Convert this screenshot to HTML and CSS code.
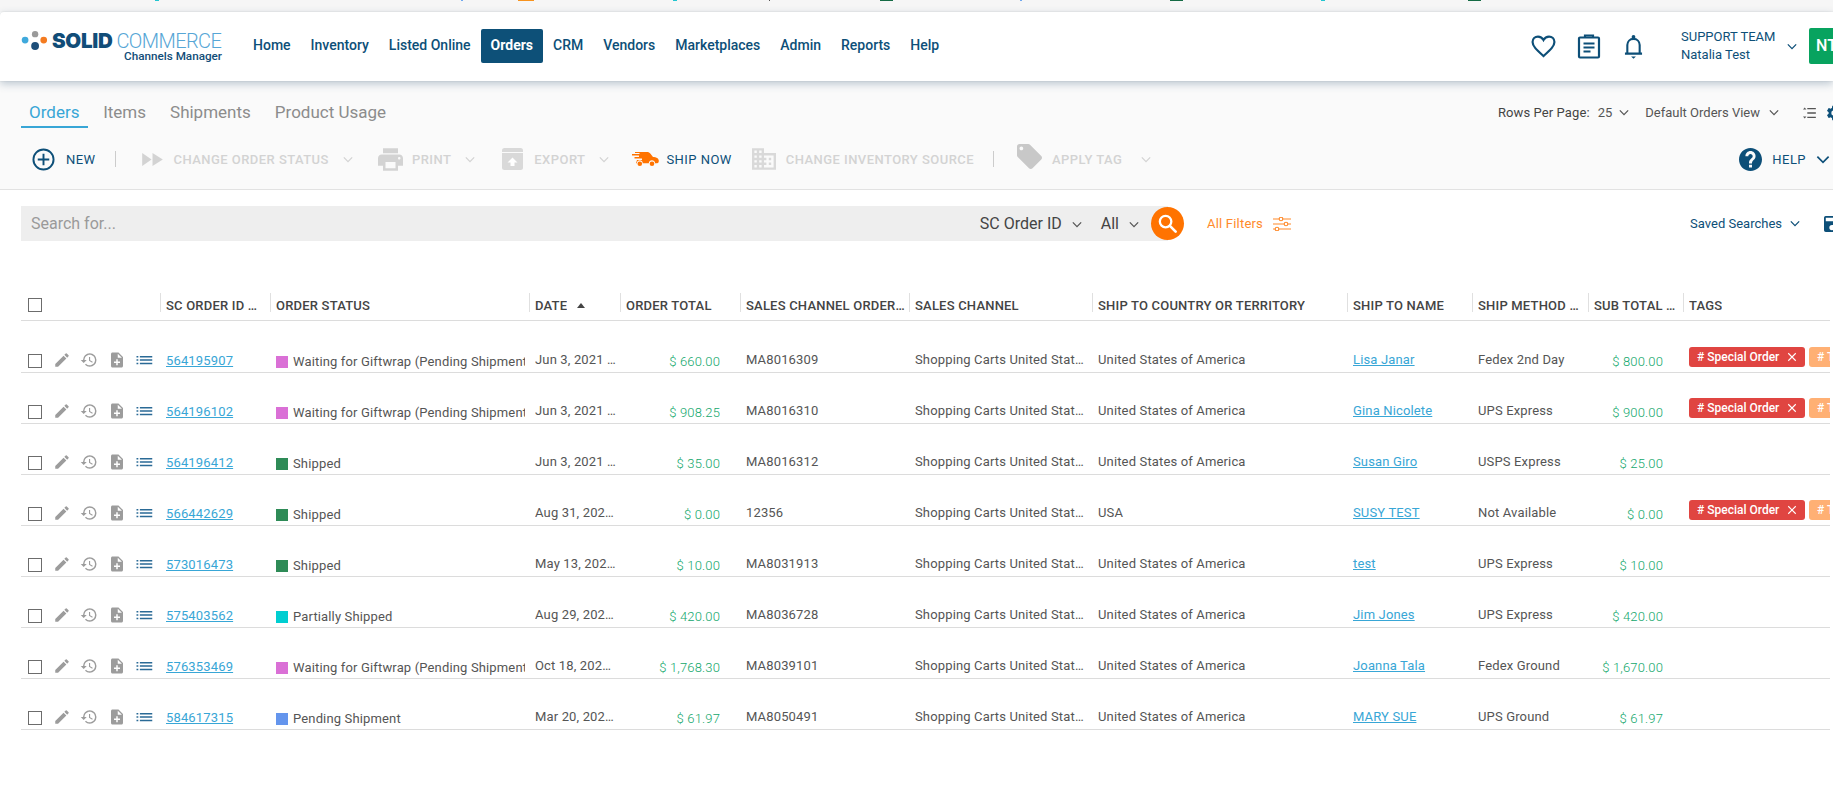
FILE: index.html
```html
<!DOCTYPE html>
<html lang="en">
<head>
<meta charset="utf-8">
<title>Orders - Solid Commerce</title>
<link rel="stylesheet" href="styles.css">
</head>
<body>
<svg class="defs" aria-hidden="true">
  <symbol id="i-edit" viewBox="0 0 24 24"><path d="M3 17.25V21h3.75L17.81 9.94l-3.75-3.75L3 17.25zM20.71 7.04a1 1 0 0 0 0-1.41l-2.34-2.34a1 1 0 0 0-1.41 0l-1.83 1.83 3.75 3.75 1.83-1.83z"/></symbol>
  <symbol id="i-history" viewBox="0 0 24 24"><path d="M13 3a9 9 0 0 0-9 9H1l3.89 3.89.07.14L9 12H6c0-3.87 3.13-7 7-7s7 3.13 7 7-3.13 7-7 7c-1.93 0-3.68-.79-4.94-2.06l-1.42 1.42A8.954 8.954 0 0 0 13 21a9 9 0 0 0 0-18zm-1 5v5l4.28 2.54.72-1.21-3.5-2.08V8H12z"/></symbol>
  <symbol id="i-note" viewBox="0 0 24 24"><path d="M14 2H6c-1.1 0-2 .9-2 2v16c0 1.1.9 2 2 2h12c1.1 0 2-.9 2-2V8l-6-6zm2 14h-3v3h-2v-3H8v-2h3v-3h2v3h3v2zm-3-7V3.5L18.5 9H13z"/></symbol>
  <symbol id="i-list" viewBox="0 0 24 24"><path d="M2 13h2.4v-2H2v2zm0 4.500h2.400v-2H2v2zm0-9h2.400v-2H2v2zm4.500 4.500H23v-2H6.500v2zm0 4.500H23v-2H6.500v2zm0-11v2H23v-2H6.500z"/></symbol>
  <symbol id="i-chev" viewBox="0 0 12 8"><path d="M1 1.500l5 5 5-5" fill="none" stroke="currentColor" stroke-width="1.500"/></symbol>
  <symbol id="i-x" viewBox="0 0 12 12"><path d="M1.500 1.500l9 9M10.500 1.500l-9 9" fill="none" stroke="#fff" stroke-width="1.300"/></symbol>
</svg>

<div class="strip"></div>

<header class="topbar">
  <a class="logo">
    <span class="logo-top">
      <svg class="logo-dots" viewBox="0 0 32 22"><circle cx="4" cy="10" r="3.700" fill="#3fa9dc"/><circle cx="15" cy="3.500" r="3.500" fill="#9a9a9a"/><circle cx="15" cy="16.500" r="4.300" fill="#1d4e79"/><circle cx="24.500" cy="10" r="3.700" fill="#f47b20"/></svg>
      <b class="logo-solid">SOLID</b><span class="logo-commerce">COMMERCE</span>
    </span>
    <span class="logo-sub">Channels Manager</span>
  </a>
  <nav class="nav">
    <a class="nav-item">Home</a>
    <a class="nav-item">Inventory</a>
    <a class="nav-item">Listed Online</a>
    <a class="nav-item nav-active">Orders</a>
    <a class="nav-item">CRM</a>
    <a class="nav-item">Vendors</a>
    <a class="nav-item">Marketplaces</a>
    <a class="nav-item">Admin</a>
    <a class="nav-item">Reports</a>
    <a class="nav-item">Help</a>
  </nav>
  <div class="top-right">
    <svg class="ti ti-heart" viewBox="0 0 24 24"><path d="M12 21.200C5.500 15.300 1.500 11.800 1.500 7.700 1.500 4.600 3.900 2.500 6.700 2.500c2.100 0 4.100 1.100 5.300 3.200 1.200-2.100 3.200-3.200 5.300-3.200 2.800 0 5.200 2.100 5.200 5.200 0 4.100-4 7.600-10.500 13.500z" fill="none" stroke="#0d4f78" stroke-width="2.100"/></svg>
    <svg class="ti ti-clip" viewBox="0 0 24 26"><path d="M3 4.500h18a1 1 0 0 1 1 1v18a1 1 0 0 1-1 1H3a1 1 0 0 1-1-1v-18a1 1 0 0 1 1-1z" fill="none" stroke="#0d4f78" stroke-width="2.200"/><path d="M8 5V2.500h8V5M6.500 10.500h11M6.500 14.500h11M6.500 18.500h7" fill="none" stroke="#0d4f78" stroke-width="2.200"/></svg>
    <svg class="ti ti-bell" viewBox="0 0 20 26"><path d="M1 20.500h18M3.500 20.500v-9c0-3.800 2.800-6.500 6.500-6.500s6.500 2.700 6.500 6.500v9" fill="none" stroke="#0d4f78" stroke-width="2.200"/><circle cx="10" cy="3" r="2" fill="#0d4f78"/><path d="M7.500 23.500h5l-2.500 2.500z" fill="#0d4f78"/></svg>
    <div class="user"><span>SUPPORT TEAM</span><span>Natalia Test</span></div>
    <svg class="chev chev-user"><use href="#i-chev"/></svg>
    <div class="avatar">NT</div>
  </div>
</header>

<section class="toolbar">
  <div class="tabrow">
    <div class="tabs">
      <a class="tab tab-active">Orders</a>
      <a class="tab">Items</a>
      <a class="tab">Shipments</a>
      <a class="tab">Product Usage</a>
    </div>
    <div class="view-ctl">
      <span class="rows-label">Rows Per Page:</span>
      <span class="rows-val">25</span>
      <svg class="chev chev-dark"><use href="#i-chev"/></svg>
      <span class="view-name">Default Orders View</span>
      <svg class="chev chev-dark"><use href="#i-chev"/></svg>
      <svg class="view-list" viewBox="0 0 16 14"><path d="M6 2h10M6 7h10M6 12h10" stroke="#555" stroke-width="1.500"/><path d="M1 3l2-2.500L5 3zM1 11l2 2.500L5 11z" fill="#555"/></svg>
      <svg class="view-gear" viewBox="0 0 24 24"><path fill="#0d4f78" d="M19.140 12.940c.04-.3.060-.61.060-.94 0-.32-.020-.64-.070-.94l2.030-1.580a.49.490 0 0 0 .12-.61l-1.920-3.320a.488.488 0 0 0-.59-.22l-2.390.96c-.5-.38-1.030-.7-1.620-.94l-.36-2.540a.484.484 0 0 0-.48-.41h-3.840c-.24 0-.43.17-.47.41l-.36 2.540c-.59.24-1.130.57-1.620.94l-2.390-.96a.49.490 0 0 0-.59.22L2.740 8.870c-.12.210-.080.470.12.610l2.030 1.580c-.05.3-.09.63-.09.94s.020.64.070.94l-2.030 1.580a.49.490 0 0 0-.12.61l1.920 3.320c.12.220.37.29.59.22l2.390-.96c.5.380 1.030.7 1.620.94l.36 2.540c.05.240.24.410.48.410h3.840c.24 0 .44-.17.47-.41l.36-2.540c.59-.24 1.130-.56 1.620-.94l2.390.96c.22.080.47 0 .59-.22l1.920-3.320c.12-.22.070-.47-.12-.61l-2.010-1.580zM12 15.600a3.600 3.600 0 1 1 0-7.200 3.600 3.600 0 0 1 0 7.200z"/></svg>
    </div>
  </div>
  <div class="actions">
    <div class="act act-on act-new">
      <svg class="ai ai-new" viewBox="0 0 24 24"><circle cx="12" cy="12" r="10.500" fill="none" stroke="#0d4f78" stroke-width="2"/><path d="M12 6v12M6 12h12" stroke="#0d4f78" stroke-width="2"/></svg>
      <span>NEW</span>
    </div>
    <i class="sep sep-a"></i>
    <div class="act act-status">
      <svg class="ai ai-play" viewBox="0 0 22 16"><path d="M0 1l10 7-10 7zM11 1l11 7-11 7z" fill="#d3d3d3"/></svg>
      <span>CHANGE ORDER STATUS</span>
      <svg class="chev chev-off"><use href="#i-chev"/></svg>
    </div>
    <div class="act act-print">
      <svg class="ai ai-print" viewBox="2 3 20 18"><path fill="#d3d3d3" d="M19 8H5c-1.660 0-3 1.340-3 3v6h4v4h12v-4h4v-6c0-1.660-1.340-3-3-3zm-3 11H8v-5h8v5zm3-7c-.55 0-1-.45-1-1s.45-1 1-1 1 .45 1 1-.45 1-1 1zm-1-9H6v4h12V3z"/></svg>
      <span>PRINT</span>
      <svg class="chev chev-off"><use href="#i-chev"/></svg>
    </div>
    <div class="act act-export">
      <svg class="ai ai-export" viewBox="0 0 21 22"><rect y="0" width="21" height="22" rx="2.500" fill="#d9d9d9"/><path d="M0 4.500h21" stroke="#fafafa" stroke-width="1"/><path d="M10.500 9.500l5 5h-3v3.500h-4v-3.500h-3z" fill="#fff"/></svg>
      <span>EXPORT</span>
      <svg class="chev chev-off"><use href="#i-chev"/></svg>
    </div>
    <div class="act act-on act-ship">
      <svg class="ai ai-ship" viewBox="0 0 28 16"><path fill="#ff7300" d="M9 1h7c1.500 0 2.500.5 3.500 1.700L22 6c3 .2 5.500 1 5.800 3.500.1 1.400-.4 2.800-1.700 2.800h-2c0-4-6.300-4-6.300 0h-6c0-4-6-4-6 0H5L6 9h5V7.500H3.500V6H8V4.500H1V3h7.500V2H4V1z"/><circle cx="8.800" cy="12.800" r="2.300" fill="#ff7300"/><circle cx="21" cy="12.800" r="2.300" fill="#ff7300"/></svg>
      <span>SHIP NOW</span>
    </div>
    <div class="act act-inv">
      <svg class="ai ai-bld" viewBox="2 3 20 18"><path fill="#d9d9d9" d="M12 7V3H2v18h20V7H12zM6 19H4v-2h2v2zm0-4H4v-2h2v2zm0-4H4V9h2v2zm0-4H4V5h2v2zm4 12H8v-2h2v2zm0-4H8v-2h2v2zm0-4H8V9h2v2zm0-4H8V5h2v2zm10 12h-8v-2h2v-2h-2v-2h2v-2h-2V9h8v10zm-2-8h-2v2h2v-2zm0 4h-2v2h2v-2z"/></svg>
      <span>CHANGE INVENTORY SOURCE</span>
    </div>
    <i class="sep sep-b"></i>
    <div class="act act-tag">
      <svg class="ai ai-tag" viewBox="2 2 20 20"><path fill="#c8c8c8" d="M21.410 11.580l-9-9C12.050 2.220 11.550 2 11 2H4c-1.100 0-2 .9-2 2v7c0 .55.22 1.050.59 1.420l9 9c.36.36.86.58 1.410.58.55 0 1.050-.22 1.410-.59l7-7c.37-.36.59-.86.59-1.410 0-.55-.23-1.060-.59-1.420zM5.500 7C4.670 7 4 6.330 4 5.500S4.670 4 5.500 4 7 4.670 7 5.500 6.330 7 5.500 7z"/></svg>
      <span>APPLY TAG</span>
      <svg class="chev chev-off chev-tag"><use href="#i-chev"/></svg>
    </div>
    <div class="act act-on act-help">
      <svg class="ai ai-new ai-help" viewBox="2 2 20 20"><path fill="#0d4f78" d="M12 2C6.480 2 2 6.480 2 12s4.480 10 10 10 10-4.480 10-10S17.520 2 12 2zm1.300 17h-2.600v-2.500h2.600V19zm2.300-7.500l-.9.92c-.9.9-1.400 1.500-1.400 3.080h-2.600v-.5c0-1.300.5-2.400 1.300-3.200l1.300-1.300c.4-.36.6-.86.6-1.400 0-1-.9-1.900-1.900-1.900s-1.900.9-1.900 1.900H7.600c0-2.450 2-4.400 4.400-4.400s4.400 1.950 4.400 4.400c0 .95-.3 1.800-.8 2.400z"/></svg>
      <span>HELP</span>
      <svg class="chev chev-help"><use href="#i-chev"/></svg>
    </div>
  </div>
</section>

<section class="searchrow">
  <div class="searchbar">
    <span class="ph">Search for...</span>
    <span class="sb-sel">SC Order ID</span>
    <svg class="chev chev-grey"><use href="#i-chev"/></svg>
    <span class="sb-sel sb-all">All</span>
    <svg class="chev chev-grey"><use href="#i-chev"/></svg>
  </div>
  <button class="sbtn" aria-label="Search"><svg viewBox="0 0 24 24"><circle cx="10" cy="10" r="6" fill="none" stroke="#fff" stroke-width="2.400"/><path d="M14.500 14.500l6 6" stroke="#fff" stroke-width="2.800" stroke-linecap="round"/></svg></button>
  <span class="allf">All Filters</span>
  <svg class="fico" viewBox="0 0 18 14"><path d="M0 2h18M0 7h18M0 12h18" stroke="#ff8a2b" stroke-width="1.100"/><circle cx="8" cy="2" r="1.800" fill="#fff" stroke="#ff8a2b" stroke-width="1.100"/><circle cx="13" cy="7" r="1.800" fill="#fff" stroke="#ff8a2b" stroke-width="1.100"/><circle cx="4" cy="12" r="1.800" fill="#fff" stroke="#ff8a2b" stroke-width="1.100"/></svg>
  <span class="saved">Saved Searches</span>
  <svg class="chev chev-saved"><use href="#i-chev"/></svg>
  <svg class="saveico" viewBox="3 3 18 18"><path fill="#0d4f78" d="M17 3H5a2 2 0 0 0-2 2v14a2 2 0 0 0 2 2h14a2 2 0 0 0 2-2V7l-4-4zm-5 16a3 3 0 1 1 0-6 3 3 0 0 1 0 6zm3-10H5V5h10v4z"/></svg>
</section>

<main class="grid">
  <div class="row head">
    <div class="hc hc-first"><i class="cb"></i></div>
    <div class="hc hc-id"><span>SC ORDER ID NUMBER</span></div>
    <div class="hc"><span>ORDER STATUS</span></div>
    <div class="hc"><span class="nofill">DATE</span><i class="sort"></i></div>
    <div class="hc"><span>ORDER TOTAL</span></div>
    <div class="hc"><span>SALES CHANNEL ORDER NUMBER</span></div>
    <div class="hc"><span>SALES CHANNEL</span></div>
    <div class="hc"><span>SHIP TO COUNTRY OR TERRITORY</span></div>
    <div class="hc"><span>SHIP TO NAME</span></div>
    <div class="hc"><span>SHIP METHOD NAME</span></div>
    <div class="hc"><span>SUB TOTAL AMOUNT</span></div>
    <div class="hc"><span>TAGS</span></div>
  </div>

  <div class="row item">
    <div class="c tools"><i class="cb"></i><svg class="ri"><use href="#i-edit"/></svg><svg class="ri"><use href="#i-history"/></svg><svg class="ri"><use href="#i-note"/></svg><svg class="ri ri-list"><use href="#i-list"/></svg></div>
    <div class="c c-id"><a class="link">564195907</a></div>
    <div class="c c-st"><i class="sq sq-gift"></i><span class="st-txt">Waiting for Giftwrap (Pending Shipment)</span></div>
    <div class="c c-date"><span class="el">Jun 3, 2021 10:15 AM</span></div>
    <div class="c c-amt">$ 660.00</div>
    <div class="c">MA8016309</div>
    <div class="c"><span class="el">Shopping Carts United States</span></div>
    <div class="c">United States of America</div>
    <div class="c"><a class="link">Lisa Janar</a></div>
    <div class="c">Fedex 2nd Day</div>
    <div class="c c-sub">$ 800.00</div>
    <div class="c c-tags"><span class="chip chip-red"># Special Order<svg class="chip-x"><use href="#i-x"/></svg></span><span class="chip chip-or"># Test Order</span></div>
  </div>
  <div class="row item">
    <div class="c tools"><i class="cb"></i><svg class="ri"><use href="#i-edit"/></svg><svg class="ri"><use href="#i-history"/></svg><svg class="ri"><use href="#i-note"/></svg><svg class="ri ri-list"><use href="#i-list"/></svg></div>
    <div class="c c-id"><a class="link">564196102</a></div>
    <div class="c c-st"><i class="sq sq-gift"></i><span class="st-txt">Waiting for Giftwrap (Pending Shipment)</span></div>
    <div class="c c-date"><span class="el">Jun 3, 2021 10:21 AM</span></div>
    <div class="c c-amt">$ 908.25</div>
    <div class="c">MA8016310</div>
    <div class="c"><span class="el">Shopping Carts United States</span></div>
    <div class="c">United States of America</div>
    <div class="c"><a class="link">Gina Nicolete</a></div>
    <div class="c">UPS Express</div>
    <div class="c c-sub">$ 900.00</div>
    <div class="c c-tags"><span class="chip chip-red"># Special Order<svg class="chip-x"><use href="#i-x"/></svg></span><span class="chip chip-or"># Test Order</span></div>
  </div>
  <div class="row item">
    <div class="c tools"><i class="cb"></i><svg class="ri"><use href="#i-edit"/></svg><svg class="ri"><use href="#i-history"/></svg><svg class="ri"><use href="#i-note"/></svg><svg class="ri ri-list"><use href="#i-list"/></svg></div>
    <div class="c c-id"><a class="link">564196412</a></div>
    <div class="c c-st"><i class="sq sq-ship"></i><span class="st-txt">Shipped</span></div>
    <div class="c c-date"><span class="el">Jun 3, 2021 10:40 AM</span></div>
    <div class="c c-amt">$ 35.00</div>
    <div class="c">MA8016312</div>
    <div class="c"><span class="el">Shopping Carts United States</span></div>
    <div class="c">United States of America</div>
    <div class="c"><a class="link">Susan Giro</a></div>
    <div class="c">USPS Express</div>
    <div class="c c-sub">$ 25.00</div>
    <div class="c c-tags"></div>
  </div>
  <div class="row item">
    <div class="c tools"><i class="cb"></i><svg class="ri"><use href="#i-edit"/></svg><svg class="ri"><use href="#i-history"/></svg><svg class="ri"><use href="#i-note"/></svg><svg class="ri ri-list"><use href="#i-list"/></svg></div>
    <div class="c c-id"><a class="link">566442629</a></div>
    <div class="c c-st"><i class="sq sq-ship"></i><span class="st-txt">Shipped</span></div>
    <div class="c c-date"><span class="el">Aug 31, 2021 3:02 PM</span></div>
    <div class="c c-amt">$ 0.00</div>
    <div class="c">12356</div>
    <div class="c"><span class="el">Shopping Carts United States</span></div>
    <div class="c">USA</div>
    <div class="c"><a class="link">SUSY TEST</a></div>
    <div class="c">Not Available</div>
    <div class="c c-sub">$ 0.00</div>
    <div class="c c-tags"><span class="chip chip-red"># Special Order<svg class="chip-x"><use href="#i-x"/></svg></span><span class="chip chip-or"># Test Order</span></div>
  </div>
  <div class="row item">
    <div class="c tools"><i class="cb"></i><svg class="ri"><use href="#i-edit"/></svg><svg class="ri"><use href="#i-history"/></svg><svg class="ri"><use href="#i-note"/></svg><svg class="ri ri-list"><use href="#i-list"/></svg></div>
    <div class="c c-id"><a class="link">573016473</a></div>
    <div class="c c-st"><i class="sq sq-ship"></i><span class="st-txt">Shipped</span></div>
    <div class="c c-date"><span class="el">May 13, 2022 9:12 AM</span></div>
    <div class="c c-amt">$ 10.00</div>
    <div class="c">MA8031913</div>
    <div class="c"><span class="el">Shopping Carts United States</span></div>
    <div class="c">United States of America</div>
    <div class="c"><a class="link">test</a></div>
    <div class="c">UPS Express</div>
    <div class="c c-sub">$ 10.00</div>
    <div class="c c-tags"></div>
  </div>
  <div class="row item">
    <div class="c tools"><i class="cb"></i><svg class="ri"><use href="#i-edit"/></svg><svg class="ri"><use href="#i-history"/></svg><svg class="ri"><use href="#i-note"/></svg><svg class="ri ri-list"><use href="#i-list"/></svg></div>
    <div class="c c-id"><a class="link">575403562</a></div>
    <div class="c c-st"><i class="sq sq-part"></i><span class="st-txt">Partially Shipped</span></div>
    <div class="c c-date"><span class="el">Aug 29, 2022 1:30 PM</span></div>
    <div class="c c-amt">$ 420.00</div>
    <div class="c">MA8036728</div>
    <div class="c"><span class="el">Shopping Carts United States</span></div>
    <div class="c">United States of America</div>
    <div class="c"><a class="link">Jim Jones</a></div>
    <div class="c">UPS Express</div>
    <div class="c c-sub">$ 420.00</div>
    <div class="c c-tags"></div>
  </div>
  <div class="row item">
    <div class="c tools"><i class="cb"></i><svg class="ri"><use href="#i-edit"/></svg><svg class="ri"><use href="#i-history"/></svg><svg class="ri"><use href="#i-note"/></svg><svg class="ri ri-list"><use href="#i-list"/></svg></div>
    <div class="c c-id"><a class="link">576353469</a></div>
    <div class="c c-st"><i class="sq sq-gift"></i><span class="st-txt">Waiting for Giftwrap (Pending Shipment)</span></div>
    <div class="c c-date"><span class="el">Oct 18, 2022 4:44 PM</span></div>
    <div class="c c-amt">$ 1,768.30</div>
    <div class="c">MA8039101</div>
    <div class="c"><span class="el">Shopping Carts United States</span></div>
    <div class="c">United States of America</div>
    <div class="c"><a class="link">Joanna Tala</a></div>
    <div class="c">Fedex Ground</div>
    <div class="c c-sub">$ 1,670.00</div>
    <div class="c c-tags"></div>
  </div>
  <div class="row item">
    <div class="c tools"><i class="cb"></i><svg class="ri"><use href="#i-edit"/></svg><svg class="ri"><use href="#i-history"/></svg><svg class="ri"><use href="#i-note"/></svg><svg class="ri ri-list"><use href="#i-list"/></svg></div>
    <div class="c c-id"><a class="link">584617315</a></div>
    <div class="c c-st"><i class="sq sq-pend"></i><span class="st-txt">Pending Shipment</span></div>
    <div class="c c-date"><span class="el">Mar 20, 2023 8:05 AM</span></div>
    <div class="c c-amt">$ 61.97</div>
    <div class="c">MA8050491</div>
    <div class="c"><span class="el">Shopping Carts United States</span></div>
    <div class="c">United States of America</div>
    <div class="c"><a class="link">MARY SUE</a></div>
    <div class="c">UPS Ground</div>
    <div class="c c-sub">$ 61.97</div>
    <div class="c c-tags"></div>
  </div>
</main>
</body>
</html>
```
FILE: styles.css
```css
* { box-sizing: border-box; }
html, body { margin: 0; height: 810px; overflow: hidden; }
body { width: 1833px; background: #fff; font-family: Roboto, "Liberation Sans", sans-serif; color: #555; font-size: 13px; }
svg { display: block; flex: none; }
.defs { width: 0; height: 0; position: absolute; }

.strip {
  height: 12px;
  background-color: #f6f6f6;
  background-repeat: no-repeat;
  background-image:
    linear-gradient(#22c5d0, #22c5d0), linear-gradient(#6fa8ef, #6fa8ef), linear-gradient(#f7931e, #f7931e),
    linear-gradient(#22c5d0, #22c5d0), linear-gradient(#555, #555), linear-gradient(#156b45, #156b45),
    linear-gradient(#6fa8ef, #6fa8ef), linear-gradient(#156b45, #156b45), linear-gradient(#22c5d0, #22c5d0),
    linear-gradient(#156b45, #156b45);
  background-size: 4px 1px, 2px 1px, 16px 1px, 4px 1px, 1px 1px, 13px 1px, 2px 1px, 13px 1px, 4px 1px, 13px 1px;
  background-position: 155px 0, 461px 0, 518px 0, 673px 0, 769px 0, 880px 0, 1020px 0, 1170px 0, 1321px 0, 1468px 0;
}

.topbar {
  height: 69px;
  display: flex;
  align-items: center;
  padding: 0 0 1px 21px;
  background: #fff;
  border-radius: 4px 0 0 0;
  box-shadow: 0 0 2px rgba(0,0,0,.12), 0 3px 8px rgba(50,85,120,.3);
  position: relative;
  color: #0d4f78;
}
.logo { width: 201px; display: flex; flex-direction: column; align-items: flex-end; white-space: nowrap; }
.logo-top { display: flex; align-items: center; width: 100%; height: 20px; }
.logo-dots { width: 30px; height: 20px; }
.logo-solid { font: 900 20.500px/20px Inter, Lato, Roboto, sans-serif; color: #114d78; margin-left: 1px; letter-spacing: -.3px; }
.logo-commerce { font: 300 20px/20px Roboto, sans-serif; color: #56a6d6; margin-left: 4px; letter-spacing: -.6px; }
.logo-sub { font: 500 11.700px/12px Roboto, sans-serif; color: #114d78; margin-top: -1px; }

.nav { display: flex; align-items: center; margin-left: 21px; }
.nav-item { height: 34px; line-height: 33px; padding: 0 10px; font-size: 14px; font-weight: 500; color: #0d4f78; border-radius: 2px; white-space: nowrap; }
.nav-active { background: #0d5078; color: #fff; font-weight: 700; }

.top-right { margin-left: auto; display: flex; align-items: center; margin-right: -24px; }
.ti-heart { width: 25px; height: 25px; }
.ti-clip { width: 24px; height: 26px; margin-left: 21px; }
.ti-bell { width: 19px; height: 25px; margin-left: 23.500px; }
.user { display: flex; flex-direction: column; margin-left: 38px; font-size: 13px; line-height: 18px; color: #0d4f78; width: 106px; white-space: nowrap; }
.chev { width: 10px; height: 7px; color: #555; }
.chev-user { color: #0d4f78; }
.avatar { width: 48px; height: 36px; margin-left: 12px; background: #08a35f; color: #fff; font-size: 16px; font-weight: 500; line-height: 36px; padding-left: 7px; border-radius: 2px; }

.toolbar { height: 109px; background: #fafafa; border-bottom: 1px solid #e2e2e2; padding-top: 1px; }
.tabrow { display: flex; justify-content: space-between; height: 46px; padding-left: 21px; }
.tabs { display: flex; height: 46px; gap: 24px; }
.tab { font-size: 17px; line-height: 31px; padding-top: 15px; color: #8c8c8c; white-space: nowrap; }
.tab-active { color: #38a6d6; padding: 15px 9px 0 8px; margin-right: -9.300px; border-bottom: 2px solid #38a6d6; }
.view-ctl { display: flex; align-items: center; color: #555; padding-top: 15px; margin-right: -10px; white-space: nowrap; }
.rows-label { color: #444; letter-spacing: .1px; }
.rows-val { margin-left: 8px; margin-right: 7px; }
.view-name { margin-left: 16px; margin-right: 9px; }
.view-list { width: 14px; height: 12px; margin-left: 23px; }
.view-gear { width: 18px; height: 18px; margin-left: 9px; }

.actions { display: flex; align-items: center; height: 40px; margin-top: 11px; padding-left: 32px; }
.act { display: flex; align-items: center; font-size: 13px; font-weight: 500; color: #d3d3d3; letter-spacing: .45px; white-space: nowrap; }
.act-on { color: #0d4f78; font-weight: 400; }
.ai { margin-right: 11px; }
.ai-new { width: 23px; height: 23px; }
.ai-help { margin-right: 10px; }
.ai-play { width: 21px; height: 15px; }
.ai-print { width: 25px; height: 23px; margin-right: 9px; }
.ai-export { width: 21px; height: 22px; }
.ai-ship { width: 28px; height: 16px; margin-right: 7px; }
.ai-bld { width: 24px; height: 22px; margin-right: 10px; }
.ai-tag { width: 25px; height: 25px; margin-right: 10px; margin-top: -5px; }
.chev-off { color: #d3d3d3; margin-left: 14px; }
.chev-tag { margin-left: 19px; }
.chev-help { width: 14px; height: 9px; color: #0d4f78; margin-left: 10px; }
.sep { width: 1px; height: 16px; background: #ccc; flex: none; }
.sep-a { margin-left: 19px; }
.act-status { margin-left: 26px; }
.act-print { margin-left: 25px; }
.act-export { margin-left: 27px; }
.act-ship { margin-left: 22px; }
.act-inv { margin-left: 20px; }
.sep-b { margin-left: 19px; }
.act-tag { margin-left: 23px; }
.act-help { margin-left: auto; margin-right: 3px; }

.searchrow { display: flex; align-items: center; height: 35px; margin-top: 16px; padding-left: 21px; white-space: nowrap; }
.searchbar { width: 1147px; height: 35px; background: #eee; display: flex; align-items: center; padding-left: 10px; flex: none; }
.ph { font-size: 16px; color: #9a9a9a; margin-right: auto; }
.sb-sel { font-size: 16px; color: #444; }
.chev-grey { margin: 1px 0 0 10px; }
.sb-all { margin-left: 19px; }
.chev-grey:last-child { margin-right: 29px; }
.sbtn { width: 33px; height: 33px; border: 0; border-radius: 50%; background: #ff7300; padding: 5px; margin-left: -17.500px; flex: none; }
.allf { font-size: 13px; color: #ff8a2b; margin-left: 23.500px; letter-spacing: .2px; }
.fico { width: 18px; height: 14px; margin-left: 9.500px; }
.saved { font-size: 13px; color: #0d4f78; margin: -1px 0 0 auto; }
.chev-saved { margin-left: 8px; color: #0d4f78; }
.saveico { width: 16px; height: 16px; margin: 0 -7px 0 24px; }

.grid { margin: 52px 3px 0 21px; overflow: hidden; }
.row { display: grid; grid-template-columns: 139px 110px 259px 91px 120px 169px 183px 255px 125px 116px 95px 147px; }
.head { height: 28px; border-bottom: 1px solid #dcdcdc; margin-bottom: 1px; }
.hc { height: 19px; border-left: 1px solid #e0e0e0; padding: 5px 3px 0 5px; font-size: 13px; line-height: 16px; font-weight: 500; color: #444; letter-spacing: .2px; white-space: nowrap; display: flex; min-width: 0; }
.hc span { height: 16px; overflow: hidden; text-overflow: ellipsis; }
.hc-first { border-left: 0; padding: 5px 0 0 7px; }
.hc-id { padding-right: 12px; }
.sort { width: 0; height: 0; border: 4px solid transparent; border-bottom: 5px solid #444; border-top: 0; margin: 5px 0 0 10px; }
.cb { display: block; width: 14px; height: 14px; border: 1px solid #6c6c6c; background: #fff; flex: none; }

.item { height: 51px; border-bottom: 1px solid #dcdcdc; align-items: end; }
.c { padding: 0 5px 4px 6px; line-height: 16px; white-space: nowrap; overflow: hidden; color: #555; letter-spacing: .15px; }
.tools { display: flex; align-items: flex-end; padding: 0 0 3px 7px; gap: 9.500px; overflow: visible; }
.tools .cb { margin-bottom: 1px; margin-right: 1px; }
.ri { width: 18px; height: 18px; fill: #9c9c9c; }
.ri-list { fill: #2a6a96; }
.c-id { padding-bottom: 3px; padding-left: 6px; }
.link { color: #38a6d6; text-decoration: underline; }
.c-st { display: flex; align-items: center; padding: 0 4px 2px 6px; }
.sq { width: 12px; height: 12px; flex: none; margin-right: 5px; }
.sq-gift { background: #da70d6; }
.sq-ship { background: #2e8b57; }
.sq-part { background: #00ced1; }
.sq-pend { background: #6495ed; }
.st-txt { overflow: hidden; }
.el { display: block; overflow: hidden; text-overflow: ellipsis; padding-right: 1px; }
.c-date { padding-right: 3px; }
.c-amt, .c-sub { text-align: right; padding: 0 20px 2px 0; color: #12a76c; font-weight: 300; }
.c-tags { display: flex; gap: 4px; padding: 0 0 5px 6px; }
.chip { display: inline-flex; align-items: center; height: 20px; border-radius: 3px; color: #fff; font-size: 12px; font-weight: 500; padding: 0 8px; white-space: nowrap; flex: none; letter-spacing: 0; }
.chip-red { width: 116px; background: #e04541; }
.chip-or { background: #ffb074; }
.chip-x { width: 10px; height: 10px; margin-left: auto; }
```
